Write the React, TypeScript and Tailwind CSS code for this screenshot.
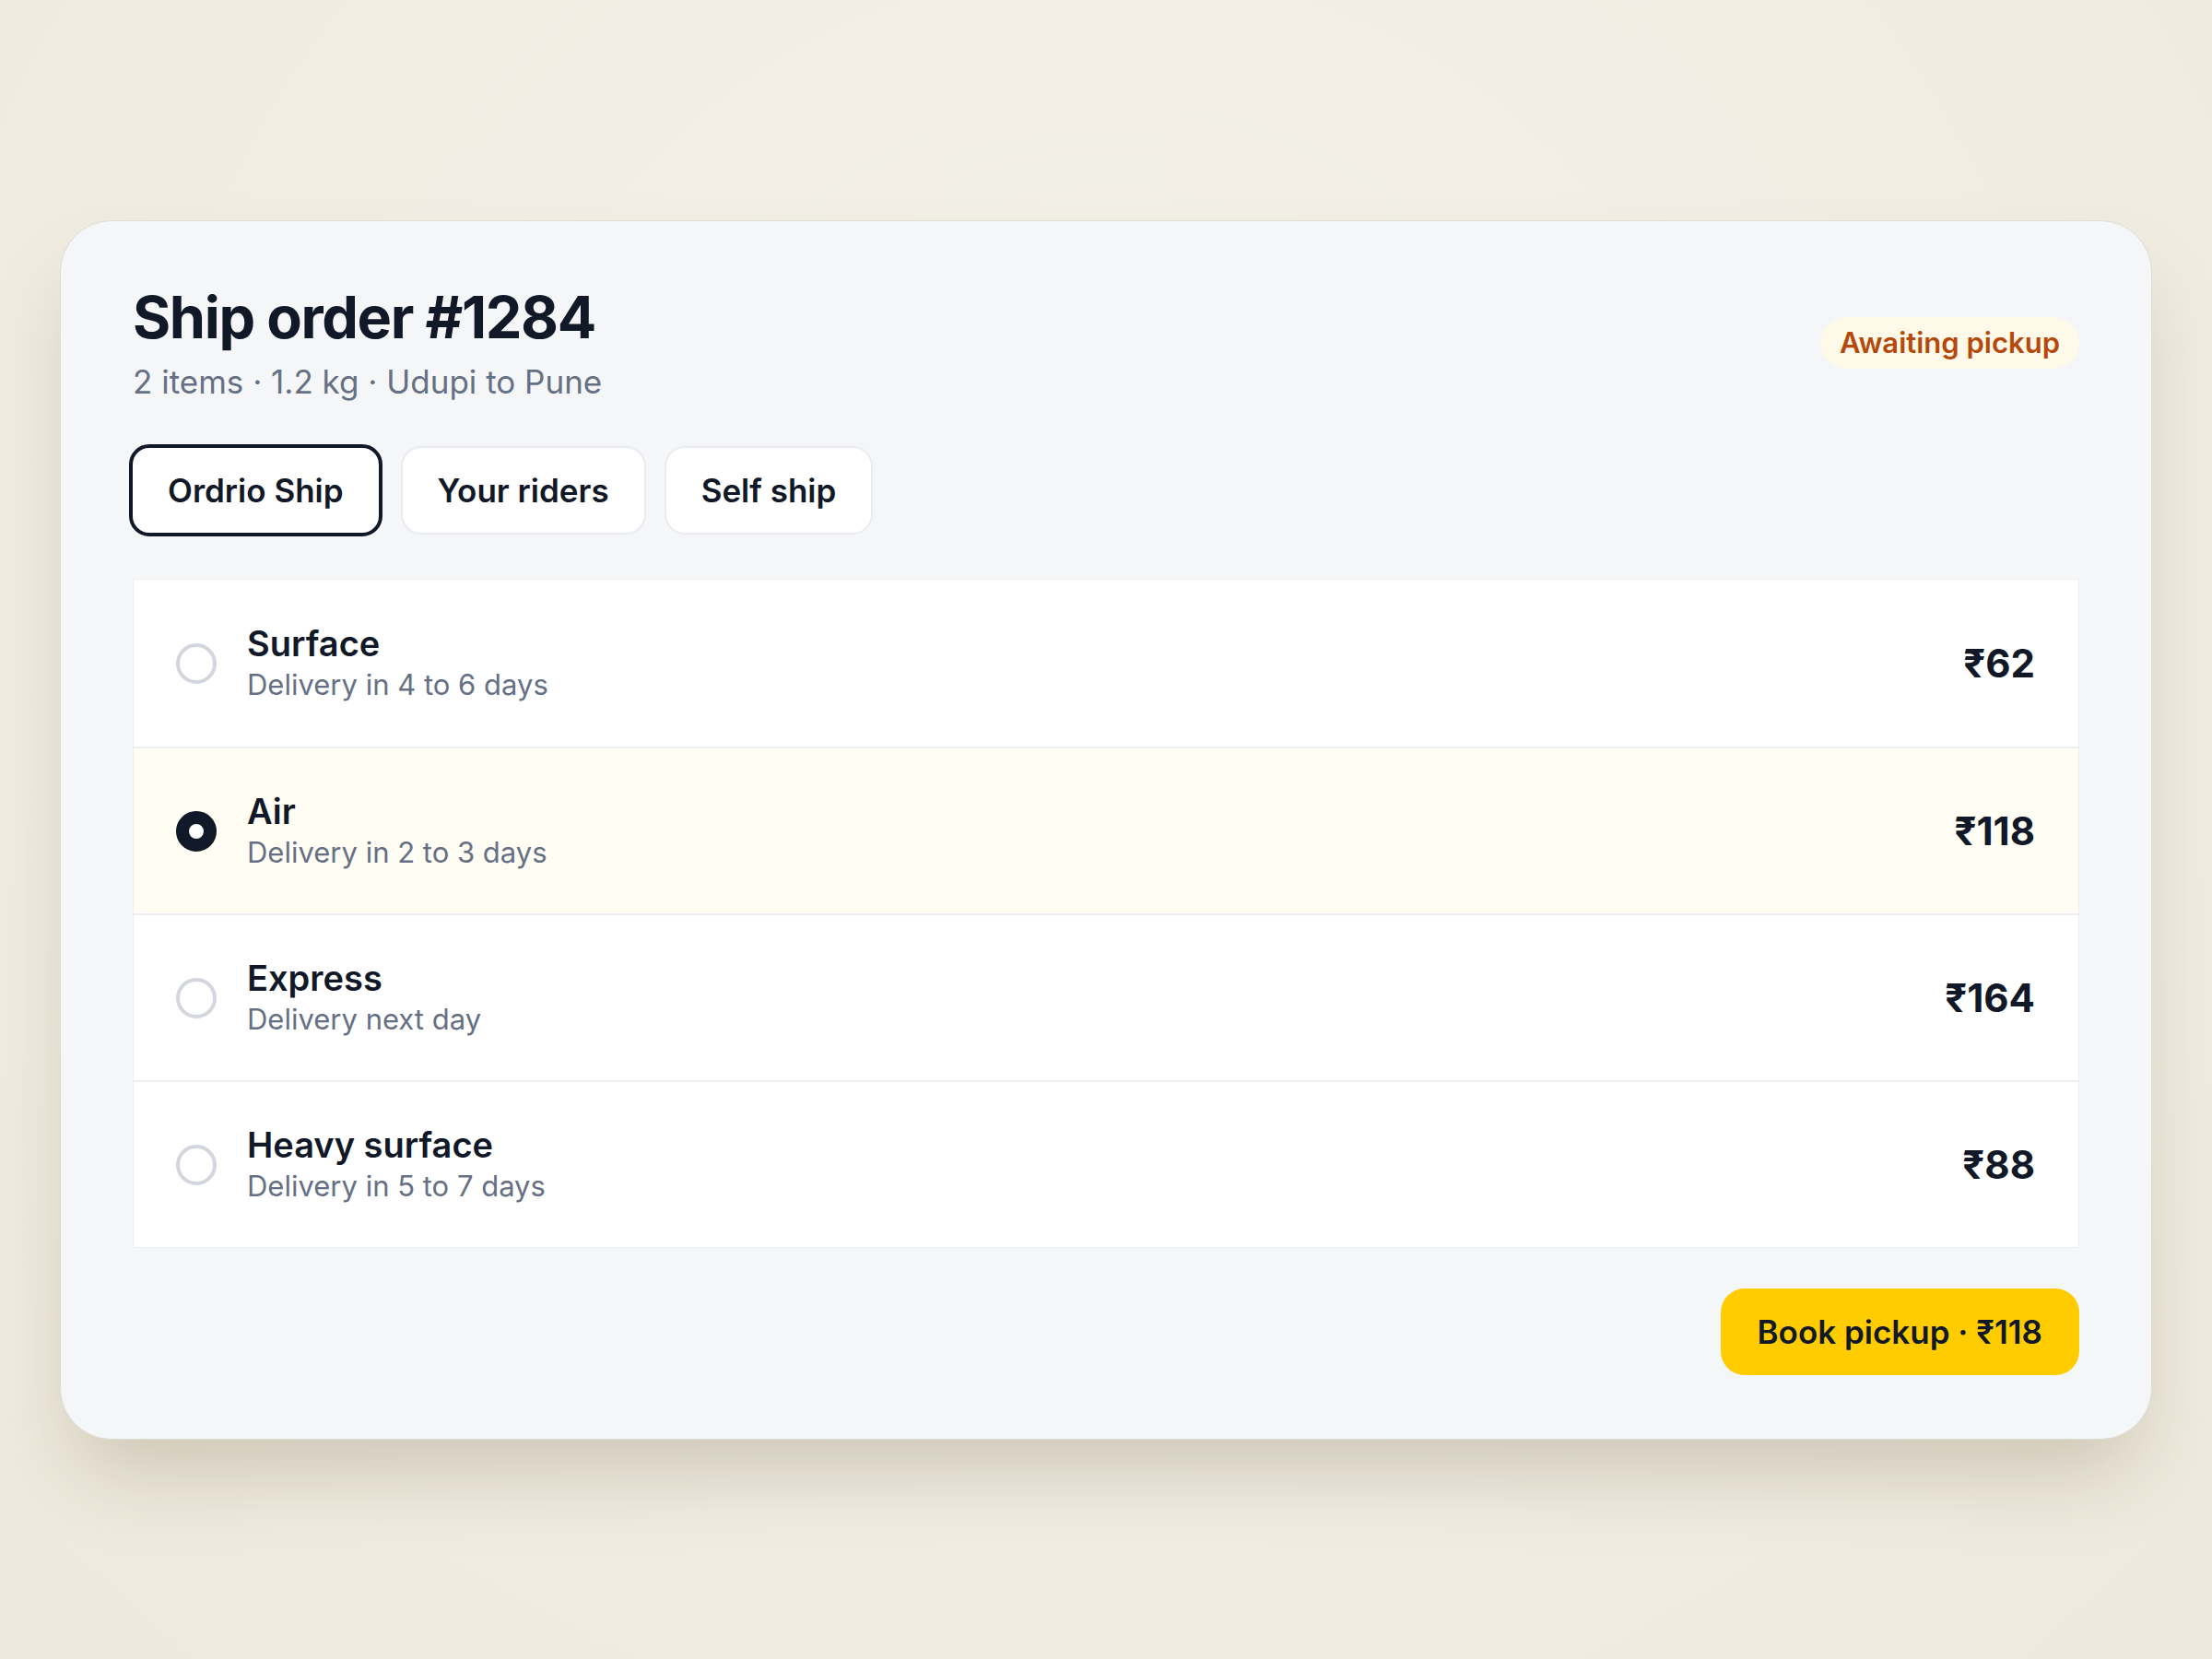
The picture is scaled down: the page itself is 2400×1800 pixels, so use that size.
import { useState } from "react";

type Rate = {
  id: string;
  name: string;
  eta: string;
  price: number;
};

const rates: Rate[] = [
  { id: "surface", name: "Surface", eta: "Delivery in 4 to 6 days", price: 62 },
  { id: "air", name: "Air", eta: "Delivery in 2 to 3 days", price: 118 },
  { id: "express", name: "Express", eta: "Delivery next day", price: 164 },
  { id: "heavy", name: "Heavy surface", eta: "Delivery in 5 to 7 days", price: 88 },
];

const tabs = ["Ordrio Ship", "Your riders", "Self ship"];

export default function App() {
  const [tab, setTab] = useState("Ordrio Ship");
  const [selected, setSelected] = useState("air");

  const chosen = rates.find((r) => r.id === selected);

  return (
    <div
      className="min-h-screen w-full bg-[radial-gradient(ellipse_at_50%_35%,#f4f1e9_0%,#f1ede3_60%,#eee9dc_100%)] pt-[239px] pb-[200px]"
      style={{ fontFamily: "Inter, 'Noto Sans', sans-serif" }}
    >
      <div className="mx-auto w-[2270px] rounded-[56px] border border-[#e0ddd4] bg-[#f4f6f8] px-[78px] pt-[66px] pb-[69px] shadow-[0_50px_90px_-20px_rgba(110,95,60,0.28)]">
        {/* header */}
        <div className="flex items-center justify-between">
          <div>
            <h1 className="text-[63px] font-bold leading-[77px] tracking-[-0.022em] text-[#111827]">
              Ship order #1284
            </h1>
            <p className="mt-[9px] text-[35px] leading-[45px] text-[#667085]">
              2 items · 1.2 kg · Udupi to Pune
            </p>
          </div>
          <span className="rounded-full bg-[#fef9e8] px-[21px] py-[9px] text-[31px] font-semibold leading-[38px] text-[#b4490b]">
            Awaiting pickup
          </span>
        </div>

        {/* carrier tabs */}
        <div className="-ml-[4px] mt-[45px] flex h-[100px] items-center gap-[20px]">
          {tabs.map((t) => (
            <button
              key={t}
              onClick={() => setTab(t)}
              className={`rounded-[22px] bg-white px-[38px] text-[35px] font-semibold text-[#111827] ${
                tab === t ? "h-[100px] border-[4px] border-[#111827]" : "h-[96px] border-2 border-[#e9ebef]"
              }`}
            >
              {t}
            </button>
          ))}
        </div>

        {/* rate list */}
        <div className="mt-[46px] border border-[#eceef1] bg-white">
          {rates.map((r, i) => {
            const on = r.id === selected;
            return (
              <div
                key={r.id}
                onClick={() => setSelected(r.id)}
                className={`flex h-[181px] cursor-pointer items-center pl-[46px] pr-[47px] ${
                  i > 0 ? "border-t-2 border-[#eceef1]" : ""
                } ${on ? "bg-[#fffdf4]" : "bg-white"}`}
              >
                <div
                  className={`h-[44px] w-[44px] shrink-0 rounded-full ${
                    on ? "border-[14px] border-[#111827] bg-white" : "border-[4px] border-[#d3d7dd] bg-white"
                  }`}
                />
                <div className="ml-[33px] flex-1">
                  <div className="text-[38px] font-semibold leading-[44px] text-[#111827]">{r.name}</div>
                  <div className="mt-[2px] text-[31px] leading-[42px] text-[#667085]">{r.eta}</div>
                </div>
                <div className="text-[42px] font-bold text-[#111827]">₹{r.price}</div>
              </div>
            );
          })}
        </div>

        {/* footer */}
        <div className="mt-[44px] flex justify-end">
          <button className="h-[94px] rounded-[26px] bg-[#ffcc00] px-[40px] text-[35px] font-semibold text-[#111827]">
            Book pickup · ₹{chosen?.price}
          </button>
        </div>
      </div>
    </div>
  );
}
